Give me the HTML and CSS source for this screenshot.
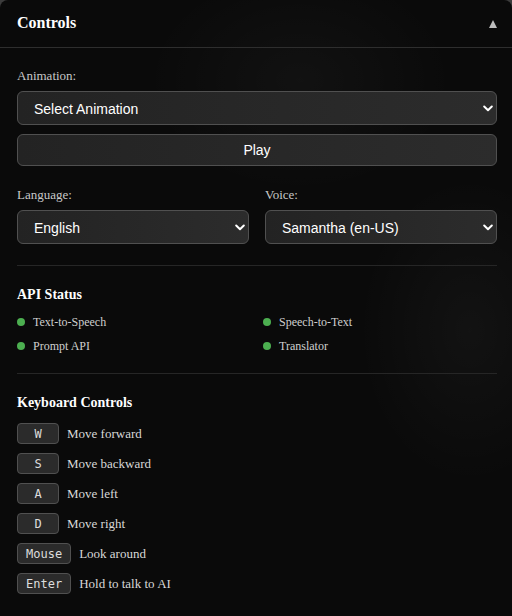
FILE: index.html
```html
<!DOCTYPE html>
<html lang="en">
<head>
<meta charset="utf-8">
<title>Controls</title>
<link rel="stylesheet" href="styles.css">
</head>
<body>
<div class="panel">
  <div class="panel-header">
    <h3 class="panel-title">Controls</h3>
    <span class="collapse-arrow"></span>
  </div>
  <div class="panel-body">
    <div class="field">
      <label class="field-label">Animation:</label>
      <select class="select">
        <option>Select Animation</option>
      </select>
      <button class="btn">Play</button>
    </div>
    <div class="field-row">
      <div class="field-col">
        <label class="field-label">Language:</label>
        <select class="select"><option>English</option></select>
      </div>
      <div class="field-col">
        <label class="field-label">Voice:</label>
        <select class="select"><option>Samantha (en-US)</option></select>
      </div>
    </div>
    <hr class="divider">
    <h4 class="section-title">API Status</h4>
    <div class="status-grid">
      <div class="status-item"><span class="dot"></span>Text-to-Speech</div>
      <div class="status-item"><span class="dot"></span>Speech-to-Text</div>
      <div class="status-item"><span class="dot"></span>Prompt API</div>
      <div class="status-item"><span class="dot"></span>Translator</div>
    </div>
    <hr class="divider">
    <h4 class="section-title">Keyboard Controls</h4>
    <div class="keys">
      <div class="key-row"><kbd class="key">W</kbd><span class="key-desc">Move forward</span></div>
      <div class="key-row"><kbd class="key">S</kbd><span class="key-desc">Move backward</span></div>
      <div class="key-row"><kbd class="key">A</kbd><span class="key-desc">Move left</span></div>
      <div class="key-row"><kbd class="key">D</kbd><span class="key-desc">Move right</span></div>
      <div class="key-row"><kbd class="key">Mouse</kbd><span class="key-desc">Look around</span></div>
      <div class="key-row"><kbd class="key">Enter</kbd><span class="key-desc">Hold to talk to AI</span></div>
    </div>
  </div>
</div>
</body>
</html>
```

FILE: styles.css
```css
* { box-sizing: border-box; }

html, body {
  margin: 0;
  padding: 0;
  background: #3c3c3c;
}

.panel {
  width: 512px;
  height: 616px;
  border-radius: 8px 8px 0 0;
  overflow: hidden;
  background:
    radial-gradient(ellipse 160px 220px at 470px 330px, rgba(255,255,255,0.035), rgba(255,255,255,0) 70%),
    radial-gradient(ellipse 220px 160px at 300px 80px, rgba(255,255,255,0.03), rgba(255,255,255,0) 70%),
    #0a0a0a;
  font-family: "Liberation Serif", "Times New Roman", serif;
  color: #ddd;
}

.panel-header {
  display: flex;
  align-items: center;
  justify-content: space-between;
  padding: 14px 15px 15px 17px;
  border-bottom: 1px solid #2e2e2e;
}

.panel-title {
  margin: 0;
  font-size: 16px;
  line-height: 18px;
  font-weight: bold;
  color: #fff;
}

.collapse-arrow {
  width: 0;
  height: 0;
  border-left: 4.5px solid transparent;
  border-right: 4.5px solid transparent;
  border-bottom: 8px solid #bdbdbd;
  margin-top: 1px;
}

.panel-body {
  padding: 20px 15px 0 17px;
}

.field-label {
  display: block;
  font-size: 13px;
  line-height: 15px;
  color: #c8c8c8;
  margin-bottom: 8px;
}

.select {
  display: block;
  width: 100%;
  height: 34px;
  margin: 0;
  padding: 2px 16px 0;
  appearance: none;
  -webkit-appearance: none;
  border: 1px solid #505050;
  border-radius: 6px;
  background-color: #252525;
  background-image: url("data:image/svg+xml;utf8,<svg xmlns='http://www.w3.org/2000/svg' width='10' height='7' viewBox='0 0 10 7'><path d='M1.2 1.5 L5 5.2 L8.8 1.5' fill='none' stroke='white' stroke-width='2' stroke-linecap='round' stroke-linejoin='round'/></svg>"), linear-gradient(90deg, #232323, #2c2c2c);
  background-repeat: no-repeat, no-repeat;
  background-position: right 3px center, 0 0;
  background-size: 10px 7px, 100% 100%;
  color: #fff;
  font-family: "Liberation Sans", Arial, sans-serif;
  font-size: 14px;
  outline: none;
}

.btn {
  display: block;
  width: 100%;
  height: 32px;
  margin: 9px 0 0;
  padding: 0;
  border: 1px solid #505050;
  border-radius: 6px;
  background: linear-gradient(90deg, #232323, #2c2c2c);
  color: #fff;
  font-family: "Liberation Sans", Arial, sans-serif;
  font-size: 14px;
}

.field {
  margin-bottom: 21px;
}

.field-row {
  display: grid;
  grid-template-columns: 1fr 1fr;
  column-gap: 16px;
}

.divider {
  border: 0;
  height: 1px;
  background: #262626;
  margin: 21px 0 20px;
}

.status-grid + .divider {
  margin-top: 20px;
}

.section-title {
  margin: 0 0 12px;
  padding-top: 1px;
  font-size: 14px;
  line-height: 16px;
  font-weight: bold;
  color: #fff;
}

.status-grid {
  display: grid;
  grid-template-columns: 1fr 1fr;
  column-gap: 12px;
  row-gap: 10px;
}

.status-item {
  display: flex;
  align-items: center;
  gap: 8px;
  font-size: 12px;
  line-height: 14px;
  color: #cfcfcf;
}

.dot {
  width: 8px;
  height: 8px;
  border-radius: 50%;
  background: #4caf50;
  flex: none;
}

.keys {
  display: flex;
  flex-direction: column;
  gap: 9px;
}

.key-row {
  display: flex;
  align-items: center;
  gap: 8px;
  height: 21px;
}

.key {
  display: inline-block;
  min-width: 42px;
  height: 21px;
  padding: 3px 8px 1px;
  border: 1px solid #505050;
  border-radius: 4px;
  background: #2b2b2b;
  color: #ddd;
  font-family: "DejaVu Sans Mono", "Liberation Mono", monospace;
  font-size: 12px;
  line-height: 15px;
  text-align: center;
}

.key-desc {
  font-size: 13px;
  color: #d8d8d8;
  padding-top: 1px;
}
```
